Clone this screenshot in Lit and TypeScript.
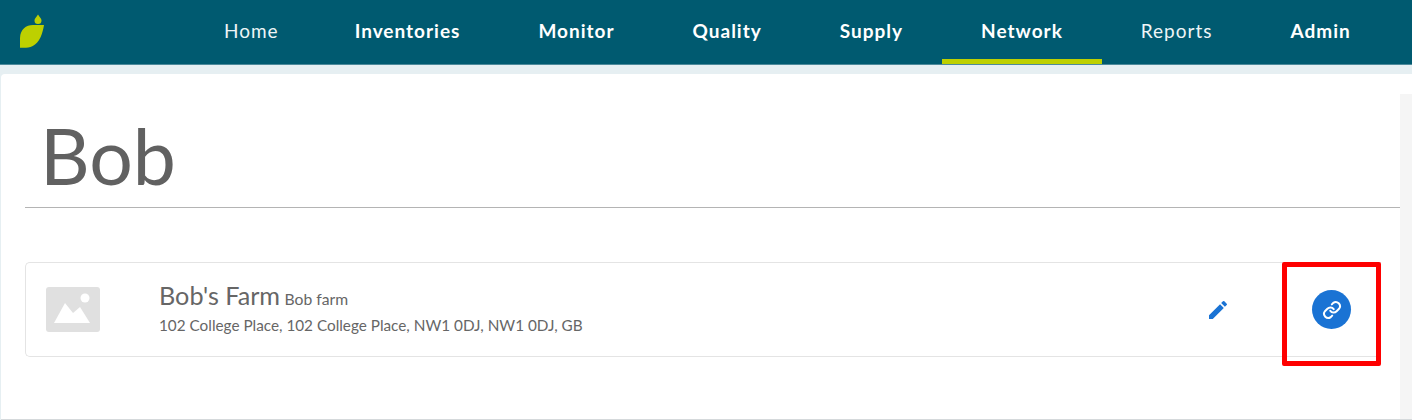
import { LitElement, html, css } from "lit";
import { customElement } from "lit/decorators.js";

const items = [
  ["Home", false], ["Inventories", true], ["Monitor", true], ["Quality", true],
  ["Supply", true], ["Network", true], ["Reports", false], ["Admin", true],
] as const;

@customElement("app-root")
export class AppRoot extends LitElement {
  static styles = css`
    :host { display: block; width: 1412px; height: 420px; overflow: hidden; position: relative; background: #e6eff2; font-family: Lato, sans-serif; color: #666; }
    header { height: 65px; box-sizing: border-box; background: #005a70; border-bottom: 1px solid #4d8a9b; display: flex; }
    .logo { width: 185px; flex: none; display: flex; padding: 14px 0 0 20px; box-sizing: border-box; }
    nav { display: flex; }
    .item { padding: 0 39px; height: 64px; box-sizing: border-box; line-height: 62px; color: #eef5f7; font-size: 19px; letter-spacing: 1px; white-space: nowrap; }
    .item:first-child { padding-right: 37px; }
    .item.b { font-weight: 700; color: #fff; }
    .item.active { border-bottom: 5px solid #bdd000; }
    main { margin: 9px 0 0 1px; height: 345px; background: #fff; border-radius: 4px 0 0 0; border-bottom: 1px solid #d5d9db; padding: 0 12px 0 24px; position: relative; }
    .track { position: absolute; right: 0; top: 20px; bottom: 0; width: 12px; background: #f5f5f5; }
    .titlewrap { height: 134px; border-bottom: 1px solid #b4b4b4; box-sizing: border-box; }
    h1 { margin: 0; padding: 26px 0 0 15px; height: 110px; box-sizing: border-box; font-size: 77px; line-height: 110px; font-weight: 400; color: #616161; }
    .card { margin: 54px 19px 0 0; height: 95px; box-sizing: border-box; border: 1px solid #e4e4e4; border-right: 0; border-radius: 5px 0 0 5px; display: flex; align-items: center; }
    .thumb { margin-left: 20px; width: 54px; height: 45px; flex: none; display: block; }
    .info { margin-left: 59px; flex: 1; }
    .name { font-size: 25.2px; line-height: 30px; color: #666; white-space: nowrap; margin-top: -4px; }
    .name small { font-size: 15.7px; margin-left: -2px; }
    .addr { font-size: 15.3px; line-height: 20px; margin-top: 1px; color: #666; white-space: nowrap; }
    .edit { flex: none; width: 24px; height: 24px; margin-right: 82px; display: block; }
    .link { flex: none; width: 39px; height: 39px; border-radius: 50%; background: #1a73d4; display: flex; align-items: center; justify-content: center; margin-right: 30px; }
    .link svg { width: 20px; height: 20px; display: block; }
    .mark { position: absolute; left: 1282px; top: 262px; width: 99px; height: 104px; box-sizing: border-box; border: 5px solid #fe0000; border-radius: 2px; }
  `;

  render() {
    return html`
      <header>
        <div class="logo">
          <svg width="25" height="34" viewBox="0 0 25 34">
            <path fill="#bdd000" d="M18 0.5 C19.5 3 21.5 4.5 21.5 6.5 A3.5 3.5 0 0 1 14.5 6.5 C14.5 4.5 16.5 3 18 0.5 Z"/>
            <path fill="#bdd000" d="M24 11 C23.5 14 21.5 26 15 30.5 C12 33 9 33.7 6 33.7 L0 33.7 L0 24 C0.5 15 6 11 13 11 Z"/>
          </svg>
        </div>
        <nav>
          ${items.map(([t, b]) => html`<div class="item ${b ? "b" : ""} ${t === "Network" ? "active" : ""}">${t}</div>`)}
        </nav>
      </header>
      <main>
        <div class="track"></div>
        <div class="titlewrap"><h1>Bob</h1></div>
        <div class="card">
          <svg class="thumb" viewBox="0 0 54 45">
            <rect width="54" height="45" rx="3" fill="#e0e0e0"/>
            <circle cx="39" cy="11" r="4.5" fill="#fff"/>
            <path fill="#fff" d="M8 36 L19 16 L27 26 L34 20 L44 36 Z"/>
          </svg>
          <div class="info">
            <div class="name">Bob's Farm <small>Bob farm</small></div>
            <div class="addr">102 College Place, 102 College Place, NW1 0DJ, NW1 0DJ, GB</div>
          </div>
          <svg class="edit" viewBox="0 0 24 24"><path fill="#1a73d4" d="M3 17.25V21h3.75L17.81 9.94l-3.75-3.75L3 17.25zM20.71 7.04a1 1 0 0 0 0-1.41l-2.34-2.34a1 1 0 0 0-1.41 0l-1.83 1.83 3.75 3.75 1.83-1.83z"/></svg>
          <div class="link">
            <svg viewBox="0 0 24 24" fill="none" stroke="#fff" stroke-width="2.4" stroke-linecap="round" stroke-linejoin="round">
              <path d="M10 13a5 5 0 0 0 7.5.5l3-3a5 5 0 0 0-7-7l-1.7 1.7"/>
              <path d="M14 11a5 5 0 0 0-7.5-.5l-3 3a5 5 0 0 0 7 7l1.7-1.7"/>
            </svg>
          </div>
        </div>
      </main>
      <div class="mark"></div>
    `;
  }
}
